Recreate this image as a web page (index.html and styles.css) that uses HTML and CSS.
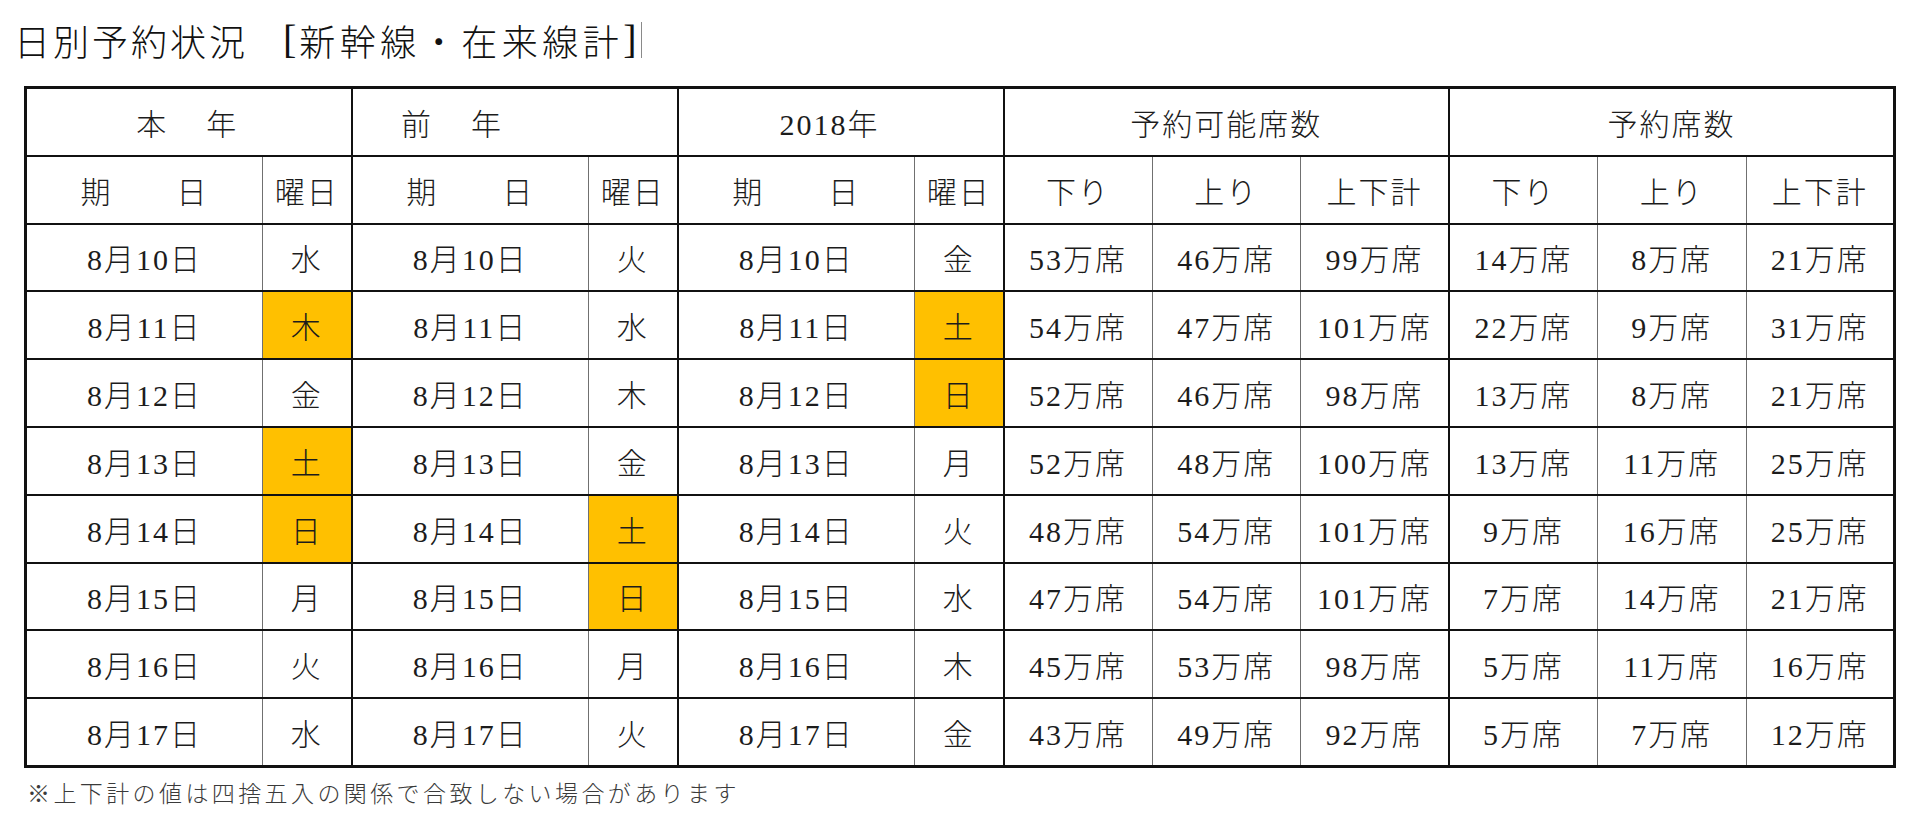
FILE: index.html
```html
<!DOCTYPE html>
<html lang="ja">
<head>
<meta charset="utf-8">
<title>日別予約状況</title>
<link rel="stylesheet" href="styles.css">
</head>
<body>
<div class="page">
  <h1 class="title"><span class="main">日別予約状況</span><span class="br">[</span><span class="sub">新幹線・在来線計</span><span class="br">]</span><span class="caret"></span></h1>
  <table class="sheet">
    <colgroup>
      <col class="c-date"><col class="c-dow">
      <col class="c-date"><col class="c-dow">
      <col class="c-date"><col class="c-dow">
      <col class="c-num"><col class="c-num"><col class="c-num">
      <col class="c-num"><col class="c-num"><col class="c-num">
    </colgroup>
    <thead>
      <tr>
        <th colspan="2" class="sp">本　年</th>
        <th colspan="2" class="g sp shift-l">前　年</th>
        <th colspan="2" class="g shift-s">2018年</th>
        <th colspan="3" class="g">予約可能席数</th>
        <th colspan="3" class="g">予約席数</th>
      </tr>
      <tr>
        <th>期　　日</th><th>曜日</th>
        <th class="g">期　　日</th><th>曜日</th>
        <th class="g">期　　日</th><th>曜日</th>
        <th class="g">下り</th><th>上り</th><th>上下計</th>
        <th class="g">下り</th><th>上り</th><th>上下計</th>
      </tr>
    </thead>
    <tbody>
      <tr>
        <td>8月10日</td><td>水</td>
        <td class="g">8月10日</td><td>火</td>
        <td class="g">8月10日</td><td>金</td>
        <td class="g">53万席</td><td>46万席</td><td>99万席</td>
        <td class="g">14万席</td><td>8万席</td><td>21万席</td>
      </tr>
      <tr>
        <td>8月11日</td><td class="hl">木</td>
        <td class="g">8月11日</td><td>水</td>
        <td class="g">8月11日</td><td class="hl">土</td>
        <td class="g">54万席</td><td>47万席</td><td>101万席</td>
        <td class="g">22万席</td><td>9万席</td><td>31万席</td>
      </tr>
      <tr>
        <td>8月12日</td><td>金</td>
        <td class="g">8月12日</td><td>木</td>
        <td class="g">8月12日</td><td class="hl">日</td>
        <td class="g">52万席</td><td>46万席</td><td>98万席</td>
        <td class="g">13万席</td><td>8万席</td><td>21万席</td>
      </tr>
      <tr>
        <td>8月13日</td><td class="hl">土</td>
        <td class="g">8月13日</td><td>金</td>
        <td class="g">8月13日</td><td>月</td>
        <td class="g">52万席</td><td>48万席</td><td>100万席</td>
        <td class="g">13万席</td><td>11万席</td><td>25万席</td>
      </tr>
      <tr>
        <td>8月14日</td><td class="hl">日</td>
        <td class="g">8月14日</td><td class="hl">土</td>
        <td class="g">8月14日</td><td>火</td>
        <td class="g">48万席</td><td>54万席</td><td>101万席</td>
        <td class="g">9万席</td><td>16万席</td><td>25万席</td>
      </tr>
      <tr>
        <td>8月15日</td><td>月</td>
        <td class="g">8月15日</td><td class="hl">日</td>
        <td class="g">8月15日</td><td>水</td>
        <td class="g">47万席</td><td>54万席</td><td>101万席</td>
        <td class="g">7万席</td><td>14万席</td><td>21万席</td>
      </tr>
      <tr>
        <td>8月16日</td><td>火</td>
        <td class="g">8月16日</td><td>月</td>
        <td class="g">8月16日</td><td>木</td>
        <td class="g">45万席</td><td>53万席</td><td>98万席</td>
        <td class="g">5万席</td><td>11万席</td><td>16万席</td>
      </tr>
      <tr>
        <td>8月17日</td><td>水</td>
        <td class="g">8月17日</td><td>火</td>
        <td class="g">8月17日</td><td>金</td>
        <td class="g">43万席</td><td>49万席</td><td>92万席</td>
        <td class="g">5万席</td><td>7万席</td><td>12万席</td>
      </tr>
    </tbody>
  </table>
  <p class="note">※上下計の値は四捨五入の関係で合致しない場合があります</p>
</div>
</body>
</html>
```

FILE: styles.css
```css
html, body {
  margin: 0;
  padding: 0;
  background: #ffffff;
}

body {
  font-family: "Liberation Serif", "Noto Sans CJK JP", serif;
  color: #1c1c1c;
}

.page {
  padding-top: 18px;
}

.title {
  margin: 0 0 0 14px;
  font-family: "Noto Sans CJK JP", sans-serif;
  font-weight: 300;
  font-size: 36px;
  line-height: 44px;
  letter-spacing: 3px;
  color: #111;
  display: flex;
  align-items: center;
}

.title .main {
  margin-right: 35px;
}

.title .sub {
  letter-spacing: 4.5px;
}

.title .br {
  font-family: "Liberation Serif", serif;
  font-size: 40px;
}

.title .caret {
  display: inline-block;
  width: 1px;
  height: 36px;
  background: #8a8a8a;
  margin-left: 1px;
}

.sheet {
  margin: 24px 0 0 24px;
  border-collapse: collapse;
  table-layout: fixed;
  width: 1869px;
  border: 3px solid #111;
}

.c-date { width: 237px; }
.c-dow { width: 89px; }
.c-num { width: 148.5px; }

.sheet th,
.sheet td {
  height: 65.8px;
  padding: 0;
  text-align: center;
  vertical-align: middle;
  border-left: 1px solid #707070;
  border-right: 1px solid #707070;
  border-top: 2px solid #111;
  border-bottom: 2px solid #111;
  font-family: "Liberation Serif", "Noto Sans CJK JP", serif;
  font-weight: 300;
  font-size: 30px;
  letter-spacing: 2px;
  color: #1c1c1c;
}

.sheet .g {
  border-left: 2px solid #111;
}

.sheet .sp {
  letter-spacing: 5px;
}

.sheet .shift-l {
  padding-right: 122px;
}

.sheet .shift-s {
  padding-right: 22px;
}

.sheet .hl {
  background: #ffc000;
}

.note {
  margin: 9px 0 0 27px;
  font-family: "Noto Sans CJK JP", sans-serif;
  font-weight: 300;
  font-size: 23px;
  line-height: 30px;
  letter-spacing: 3.4px;
  color: #3a3a3a;
}
```
